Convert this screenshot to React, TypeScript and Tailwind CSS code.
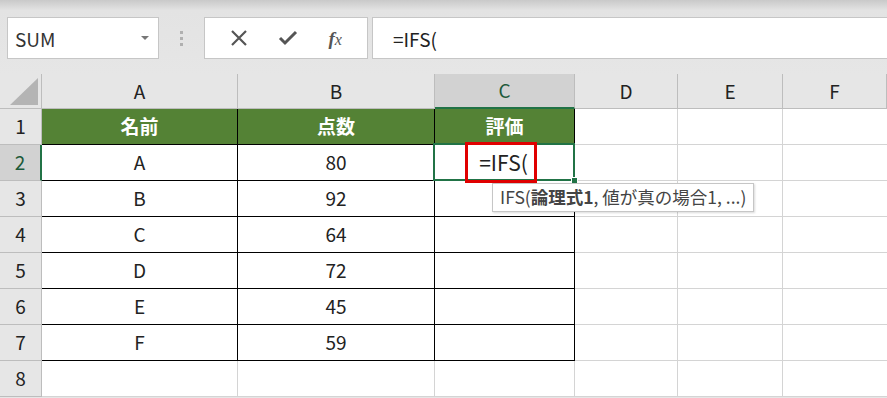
import React from "react";

const font = { fontFamily: '"Noto Sans CJK JP", "Noto Sans", sans-serif' };

const cols = ["A", "B", "C", "D", "E", "F"];
const rows = [
  ["名前", "点数", "評価"],
  ["A", "80", ""],
  ["B", "92", ""],
  ["C", "64", ""],
  ["D", "72", ""],
  ["E", "45", ""],
  ["F", "59", ""],
  ["", "", ""],
];

export default function App() {
  return (
    <div className="w-[887px] h-[398px] overflow-hidden bg-[#e6e6e6] text-[#222]" style={font}>
      {/* Formula bar */}
      <div className="h-[74px] bg-gradient-to-b from-[#c9c9c9] via-[#e3e3e3] via-[14%] to-[#e6e6e6] pt-[17px] flex items-start">
        <div className="ml-[7px] w-[152px] h-[42px] bg-white border border-[#c6c6c6] flex items-center justify-between pl-[7px] pr-[9px]">
          <span className="text-[19px] text-[#333] leading-none">SUM</span>
          <svg width="8" height="5" viewBox="0 0 8 5"><path d="M0 0h8L4 4z" fill="#777" /></svg>
        </div>
        <div className="w-[45px] h-[42px] flex flex-col items-center justify-center gap-[3px]">
          <span className="w-[3px] h-[3px] bg-[#b0b0b0]" />
          <span className="w-[3px] h-[3px] bg-[#b0b0b0]" />
          <span className="w-[3px] h-[3px] bg-[#b0b0b0]" />
        </div>
        <div className="w-[164px] h-[42px] bg-white border border-[#c6c6c6] flex items-center justify-around px-[10px]">
          <svg width="18" height="18" viewBox="0 0 18 18"><path d="M2 2l14 14M16 2L2 16" stroke="#555" strokeWidth="2.2" /></svg>
          <svg width="20" height="16" viewBox="0 0 20 16"><path d="M2 8l5 5L18 2" stroke="#555" strokeWidth="3" fill="none" /></svg>
          <span className="text-[19px] italic text-[#555] leading-none" style={{ fontFamily: '"Liberation Serif", serif' }}>
            <b className="font-bold">f</b><span className="text-[16px]">x</span>
          </span>
        </div>
        <div className="ml-[4px] flex-1 h-[42px] bg-white border-y border-l border-[#c6c6c6] flex items-center pl-[20px]">
          <span className="text-[19px] leading-none text-[#222]">=IFS(</span>
        </div>
      </div>

      {/* Sheet */}
      <div className="relative grid grid-cols-[42px_196px_197px_140px_103px_105px_1fr] grid-rows-[35px_repeat(8,36px)] bg-white">
        {/* corner */}
        <div className="bg-[#e6e6e6] border-r border-b border-[#bdbdbd] flex items-end justify-end pr-[3px] pb-[3px]">
          <svg width="28" height="27" viewBox="0 0 28 27"><path d="M28 0v27H0z" fill="#b4b4b4" /></svg>
        </div>
        {cols.map((c) => (
          <div
            key={c}
            className={
              c === "C"
                ? "bg-[#d2d2d2] border-r border-[#bdbdbd] border-b-2 border-b-[#217346] flex items-center justify-center text-[19px] text-[#1d5a3a]"
                : "bg-[#e6e6e6] border-r border-b border-[#bdbdbd] flex items-center justify-center text-[19px]"
            }
          >
            {c}
          </div>
        ))}

        {rows.map((r, i) => {
          const inTable = i < 7;
          return (
            <React.Fragment key={i}>
              <div
                className={
                  i === 1
                    ? "bg-[#d2d2d2] border-b border-[#bdbdbd] border-r-2 border-r-[#217346] flex items-center justify-center text-[19px] text-[#1d5a3a]"
                    : "bg-[#e6e6e6] border-r border-b border-[#bdbdbd] flex items-center justify-center text-[19px]"
                }
              >
                {i + 1}
              </div>
              {r.map((v, j) => {
                const header = i === 0;
                let cls = "flex items-center justify-center text-[19px] ";
                if (header) cls += "bg-[#548235] text-white font-bold border-r border-b border-black ";
                else if (inTable) cls += "border-r border-b border-black ";
                else cls += "border-r border-b border-[#d4d4d4] ";
                if (i === 1 && j === 2) cls += "relative ";
                return (
                  <div key={j} className={cls}>
                    {i === 1 && j === 2 ? (
                      <>
                        <div className="absolute -left-[2px] -top-[2px] w-[142px] h-[38px] border-2 border-[#217346]" />
                        <div className="absolute right-[-4px] bottom-[-4px] w-[7px] h-[7px] bg-[#217346] border border-white" />
                        <div className="absolute left-[30px] -top-[3px] w-[72px] h-[41px] border-[3px] border-[#e00000]" />
                        <span className="text-[21px] -ml-[2px]">=IFS(</span>
                      </>
                    ) : (
                      v
                    )}
                  </div>
                );
              })}
              {[0, 1, 2].map((k) => (
                <div key={"e" + k} className={k === 2 ? "border-b border-[#d4d4d4]" : "border-r border-b border-[#d4d4d4]"} />
              ))}
            </React.Fragment>
          );
        })}

        {/* Tooltip */}
        <div className="absolute left-[492px] top-[109px] h-[29px] px-[7px] bg-white border border-[#c6c6c6] shadow-[1px_1px_2px_rgba(0,0,0,0.15)] flex items-center text-[17.5px] text-[#444] whitespace-nowrap">
          IFS(<b className="font-bold">論理式1</b>, 値が真の場合1, ...)
        </div>
      </div>
    </div>
  );
}
